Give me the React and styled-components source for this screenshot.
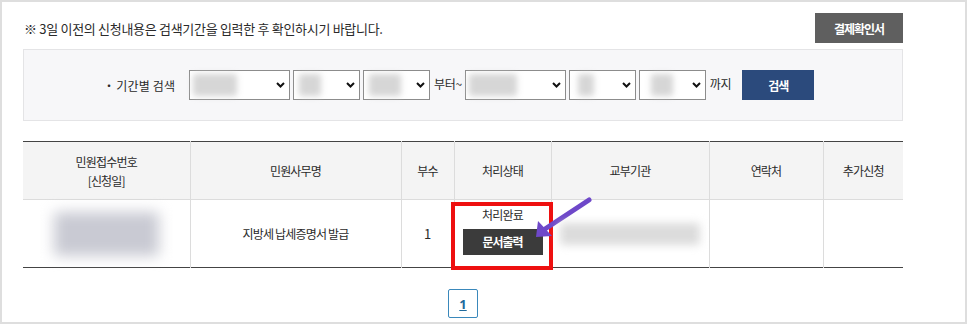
import React from 'react'
import styled, { createGlobalStyle } from 'styled-components'

const GlobalStyle = createGlobalStyle`
  html, body {
    margin: 0;
    padding: 0;
    background: #fff;
  }
  body {
    font-family: 'Noto Sans CJK KR', 'Noto Sans', sans-serif;
    color: #333;
  }
`

const Frame = styled.div`
  width: 967px;
  height: 324px;
  box-sizing: border-box;
  border: 2px solid #dedede;
  padding: 11px 62px 0 21px;
  overflow: hidden;
`

const TopRow = styled.div`
  display: flex;
  justify-content: space-between;
  align-items: center;
  padding-left: 1px;
`

const Notice = styled.p`
  margin: 0;
  font-size: 13px;
  letter-spacing: -0.3px;
  color: #2a2a2a;
`

const DarkButton = styled.button`
  border: none;
  background: ${p => p.$bg || '#5f5f5f'};
  color: #fff;
  font-family: inherit;
  font-weight: 700;
  font-size: 12px;
  letter-spacing: -1px;
  width: ${p => p.$w}px;
  height: ${p => p.$h}px;
  padding: 0;
  cursor: pointer;
`

const SearchBox = styled.div`
  margin-top: 6px;
  height: 72px;
  box-sizing: border-box;
  background: #f7f7f9;
  border: 1px solid #e4e4e6;
  display: flex;
  align-items: center;
  padding-left: 79px;
`

const Label = styled.span`
  width: 76px;
  margin-right: 10px;
  font-size: 12px;
  letter-spacing: 0.2px;
  color: #2a2a2a;
  white-space: nowrap;
  &::before {
    content: '・';
    margin-right: 1px;
  }
`

const SelectBox = styled.div`
  width: ${p => p.$w}px;
  height: 30px;
  box-sizing: border-box;
  border: 1px solid #8c8c8c;
  background: #fff;
  display: flex;
  align-items: center;
  justify-content: space-between;
  padding: 0 4px 0 3px;
  margin-right: 3px;
`

const Smudge = styled.div`
  width: ${p => p.$w}px;
  height: ${p => p.$h || 20}px;
  margin-left: ${p => p.$ml || 0}px;
  background: ${p => p.$c || '#d2d2d2'};
  filter: blur(${p => p.$b || 4}px);
  border-radius: 2px;
`

const Between = styled.span`
  font-size: 12px;
  letter-spacing: -0.3px;
  margin: 0 3px 0 1px;
  padding-bottom: 4px;
  color: #2a2a2a;
`

const SearchButton = styled(DarkButton)`
  margin-left: 8px;
  font-size: 12px;
`

const Table = styled.table`
  margin-top: 20px;
  width: 880px;
  border-collapse: collapse;
  table-layout: fixed;
  border-top: 1px solid #444;
  border-bottom: 1px solid #444;
  font-size: 12px;
  letter-spacing: -0.8px;
  color: #2a2a2a;
`

const Th = styled.th`
  background: #f4f4f4;
  font-weight: 400;
  height: 57px;
  line-height: 19px;
  border-left: 1px solid #dcdcdc;
  border-bottom: 1px solid #dcdcdc;
  padding: 0;
  &:first-child {
    border-left: none;
  }
`

const Td = styled.td`
  height: 67px;
  text-align: center;
  vertical-align: middle;
  border-left: 1px solid #dcdcdc;
  padding: 0;
  position: relative;
  &:first-child {
    border-left: none;
  }
`

const CellCenter = styled.div`
  display: flex;
  flex-direction: column;
  align-items: center;
  justify-content: center;
  gap: ${p => p.$gap || 0}px;
`

const Num = styled.span`
  font-size: 13px;
  letter-spacing: 0;
`

const StatusText = styled.span`
  font-size: 12px;
  line-height: 16px;
  margin-top: -6px;
`

const PrintButton = styled(DarkButton)`
  background: #3b3b3b;
`

const Highlight = styled.div`
  position: absolute;
  left: -4px;
  top: 2px;
  right: -2px;
  bottom: -3px;
  border: 4px solid #ee1010;
  pointer-events: none;
`

const Arrow = styled.svg`
  position: absolute;
  left: 76px;
  top: -4px;
  overflow: visible;
`

const Pager = styled.div`
  margin-top: 21px;
  width: 880px;
  display: flex;
  justify-content: center;
`

const PageLink = styled.a`
  width: 30px;
  height: 29px;
  box-sizing: border-box;
  border: 1px solid #3a88bb;
  border-radius: 2px;
  display: flex;
  align-items: center;
  justify-content: center;
  color: #1f6a9c;
  font-weight: 700;
  font-size: 13px;
  text-decoration: underline;
  font-family: 'Noto Sans', sans-serif;
`

const Chevron = () => (
  <svg width="9" height="6" viewBox="0 0 9 6">
    <path d="M1 1 L4.5 4.5 L8 1" fill="none" stroke="#111" strokeWidth="2" />
  </svg>
)

const Select = ({ w, smudge, ml }) => (
  <SelectBox $w={w}>
    <Smudge $w={smudge} $ml={ml} $h={22} $c="#d6d6d6" $b={3} />
    <Chevron />
  </SelectBox>
)

const columns = [167, 211, 53, 97, 158, 114, 80]

export default function App() {
  return (
    <>
      <GlobalStyle />
      <Frame>
        <TopRow>
          <Notice>※ 3일 이전의 신청내용은 검색기간을 입력한 후 확인하시기 바랍니다.</Notice>
          <DarkButton $w={88} $h={30}>결제확인서</DarkButton>
        </TopRow>

        <SearchBox>
          <Label>기간별 검색</Label>
          <Select w={101} smudge={44} />
          <Select w={67} smudge={22} ml={2} />
          <Select w={67} smudge={32} ml={2} />
          <Between>부터~</Between>
          <Select w={101} smudge={48} />
          <Select w={67} smudge={16} ml={5} />
          <Select w={67} smudge={22} ml={8} />
          <Between>까지</Between>
          <SearchButton $w={72} $h={30} $bg="#2b4a7c">검색</SearchButton>
        </SearchBox>

        <Table>
          <colgroup>
            {columns.map((w, i) => <col key={i} style={{ width: w }} />)}
          </colgroup>
          <thead>
            <tr>
              <Th>민원접수번호<br />[신청일]</Th>
              <Th>민원사무명</Th>
              <Th>부수</Th>
              <Th>처리상태</Th>
              <Th>교부기관</Th>
              <Th>연락처</Th>
              <Th>추가신청</Th>
            </tr>
          </thead>
          <tbody>
            <tr>
              <Td>
                <CellCenter>
                  <Smudge $w={105} $h={44} $c="#c9cad3" $b={7} />
                </CellCenter>
              </Td>
              <Td>지방세 납세증명서 발급</Td>
              <Td><Num>1</Num></Td>
              <Td>
                <CellCenter $gap={6}>
                  <StatusText>처리완료</StatusText>
                  <PrintButton $w={80} $h={26}>문서출력</PrintButton>
                </CellCenter>
                <Highlight />
                <Arrow width="64" height="48" viewBox="0 0 64 48">
                  <line x1="58" y1="4" x2="14" y2="33" stroke="#6e48c9" strokeWidth="5" strokeLinecap="round" />
                  <polygon points="5,41 7,25 21,40" fill="#6e48c9" />
                </Arrow>
              </Td>
              <Td>
                <CellCenter>
                  <Smudge $w={140} $h={22} $c="#dcdcdc" $b={4} />
                </CellCenter>
              </Td>
              <Td />
              <Td />
            </tr>
          </tbody>
        </Table>

        <Pager>
          <PageLink href="#">1</PageLink>
        </Pager>
      </Frame>
    </>
  )
}
